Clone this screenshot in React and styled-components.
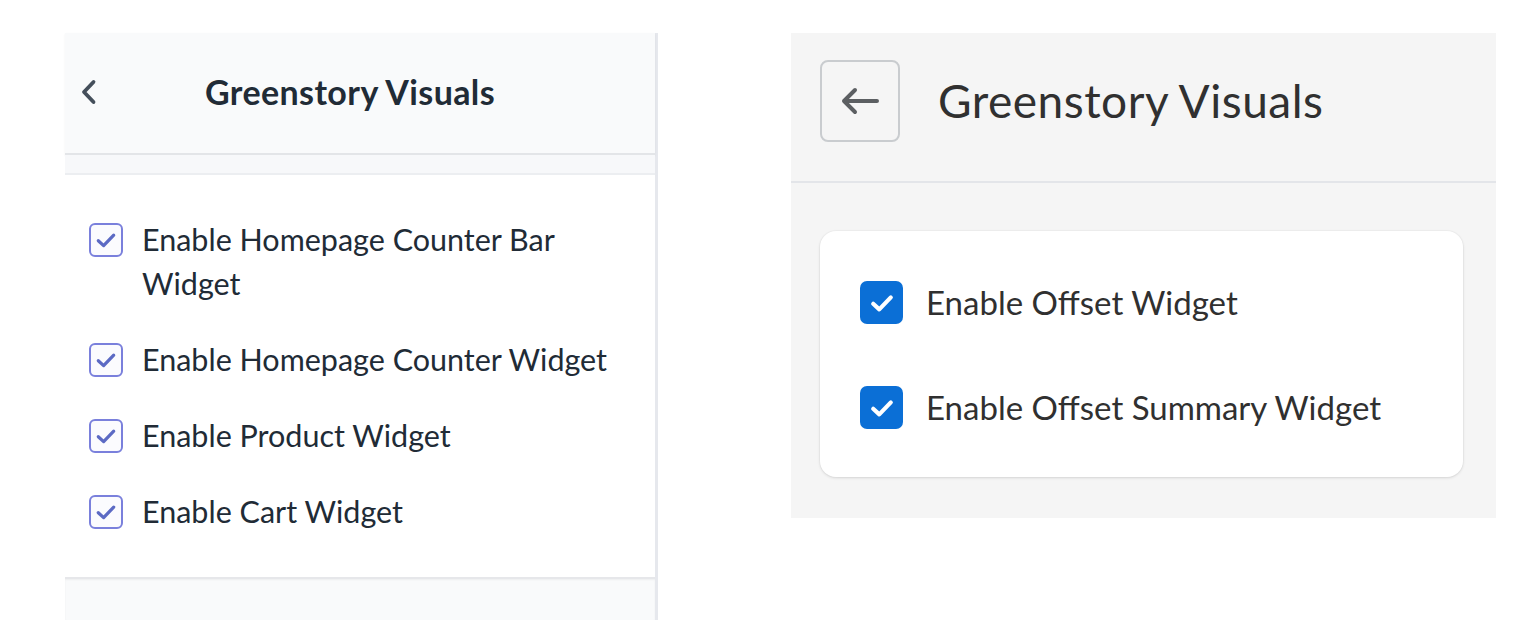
import React from 'react';
import styled, { createGlobalStyle } from 'styled-components';

const GlobalStyle = createGlobalStyle`
  html, body {
    margin: 0;
    padding: 0;
    background: #ffffff;
    overflow: hidden;
  }
  body {
    font-family: Lato, "Open Sans", "Liberation Sans", sans-serif;
    -webkit-font-smoothing: antialiased;
  }
  * {
    box-sizing: border-box;
  }
`;

const legacyItems = [
  'Enable Homepage Counter Bar Widget',
  'Enable Homepage Counter Widget',
  'Enable Product Widget',
  'Enable Cart Widget',
];

const offsetItems = ['Enable Offset Widget', 'Enable Offset Summary Widget'];

const ChevronLeft = () => (
  <svg width="20" height="28" viewBox="0 0 20 28" fill="none">
    <path d="M14.5 4 L5 14 L14.5 24" stroke="#454f5b" strokeWidth="3.8" strokeLinecap="round" strokeLinejoin="round" />
  </svg>
);

const ArrowLeft = () => (
  <svg width="40" height="30" viewBox="0 0 40 30" fill="none">
    <path d="M37 15 H4 M15 4 L4 15 L15 26" stroke="#5c5f62" strokeWidth="4" strokeLinecap="round" strokeLinejoin="round" />
  </svg>
);

const Tick = ({ size, color, width }) => (
  <svg width={size} height={size} viewBox="0 0 20 20" fill="none">
    <path d="M4.5 10.5 L8.3 14 L15.5 6.5" stroke={color} strokeWidth={width} strokeLinecap="round" strokeLinejoin="round" />
  </svg>
);

const App = () => {
  return (
    <>
      <GlobalStyle />
      <Page>
        <LegacyPanel>
          <LegacyHeader>
            <ChevronButton>
              <ChevronLeft />
            </ChevronButton>
            <LegacyTitle>Greenstory Visuals</LegacyTitle>
          </LegacyHeader>
          <LegacyGap />
          <LegacyList>
            {legacyItems.map((label) => (
              <LegacyRow key={label}>
                <LegacyBox>
                  <Tick size={28} color="#5c6ac4" width={2.3} />
                </LegacyBox>
                <LegacyLabel>{label}</LegacyLabel>
              </LegacyRow>
            ))}
          </LegacyList>
          <LegacyFooter />
        </LegacyPanel>

        <ModernPanel>
          <ModernHeader>
            <BackButton>
              <ArrowLeft />
            </BackButton>
            <ModernTitle>Greenstory Visuals</ModernTitle>
          </ModernHeader>
          <ModernBody>
            <Card>
              {offsetItems.map((label) => (
                <ModernRow key={label}>
                  <ModernBox>
                    <Tick size={32} color="#ffffff" width={2.6} />
                  </ModernBox>
                  <ModernLabel>{label}</ModernLabel>
                </ModernRow>
              ))}
            </Card>
          </ModernBody>
        </ModernPanel>
      </Page>
    </>
  );
};

export default App;

const Page = styled.div`
  display: flex;
  align-items: flex-start;
  padding: 33px 0 0 65px;
  height: 620px;
`;

const LegacyPanel = styled.div`
  width: 593px;
  height: 587px;
  display: flex;
  flex-direction: column;
  background: #f9fafb;
  border-right: 3px solid #e6e8ed;
`;

const LegacyHeader = styled.div`
  flex: none;
  height: 122px;
  display: flex;
  align-items: center;
  padding: 0 0 2px 12px;
  background: #f9fafb;
  border-bottom: 2px solid #e3e5e8;
  box-shadow: 0 1px 2px rgba(0, 0, 0, 0.06);
`;

const ChevronButton = styled.div`
  display: flex;
  align-items: center;
  justify-content: center;
  width: 24px;
  height: 30px;
`;

const LegacyTitle = styled.h1`
  margin: 0 0 0 104px;
  font-size: 34px;
  font-weight: 700;
  letter-spacing: 0.4px;
  color: #212b36;
  line-height: 1;
`;

const LegacyGap = styled.div`
  flex: none;
  height: 20px;
  background: #f7f8fa;
  border-bottom: 2px solid #eceef1;
`;

const LegacyList = styled.div`
  flex: none;
  display: flex;
  flex-direction: column;
  gap: 32px;
  padding: 42px 24px 44px;
  background: #ffffff;
`;

const LegacyRow = styled.div`
  display: flex;
  align-items: flex-start;
  gap: 19px;
`;

const LegacyBox = styled.div`
  flex: none;
  width: 34px;
  height: 34px;
  margin-top: 6px;
  display: flex;
  align-items: center;
  justify-content: center;
  border: 2px solid #7a80dc;
  border-radius: 6px;
  background: #fbfbfe;
`;

const LegacyLabel = styled.span`
  font-size: 30.5px;
  line-height: 44px;
  color: #212b36;
  max-width: 490px;
`;

const LegacyFooter = styled.div`
  flex: 1;
  background: #f9fafb;
  border-top: 2px solid #e6e7ea;
  box-shadow: inset 0 1px 2px rgba(0, 0, 0, 0.05);
`;

const ModernPanel = styled.div`
  margin-left: 133px;
  width: 705px;
  height: 485px;
  background: #f5f5f5;
  display: flex;
  flex-direction: column;
`;

const ModernHeader = styled.div`
  height: 150px;
  display: flex;
  align-items: flex-start;
  gap: 38px;
  padding: 27px 0 0 29px;
  border-bottom: 2px solid #e3e5e9;
`;

const BackButton = styled.div`
  width: 80px;
  height: 82px;
  display: flex;
  align-items: center;
  justify-content: center;
  border: 2px solid #c9cccf;
  border-radius: 8px;
`;

const ModernTitle = styled.h1`
  margin: 0;
  font-size: 46px;
  font-weight: 400;
  letter-spacing: 0.5px;
  color: #303030;
  line-height: 82px;
`;

const ModernBody = styled.div`
  padding: 48px 33px 40px 29px;
`;

const Card = styled.div`
  display: flex;
  flex-direction: column;
  gap: 62px;
  padding: 50px 40px 48px;
  background: #ffffff;
  border-radius: 16px;
  box-shadow: 0 1px 3px rgba(0, 0, 0, 0.12), 0 0 0 1px rgba(0, 0, 0, 0.02);
`;

const ModernRow = styled.div`
  display: flex;
  align-items: center;
  gap: 23px;
`;

const ModernBox = styled.div`
  flex: none;
  width: 43px;
  height: 43px;
  display: flex;
  align-items: center;
  justify-content: center;
  border-radius: 7px;
  background: #0b6fd6;
`;

const ModernLabel = styled.span`
  font-size: 33px;
  line-height: 43px;
  color: #303030;
`;
